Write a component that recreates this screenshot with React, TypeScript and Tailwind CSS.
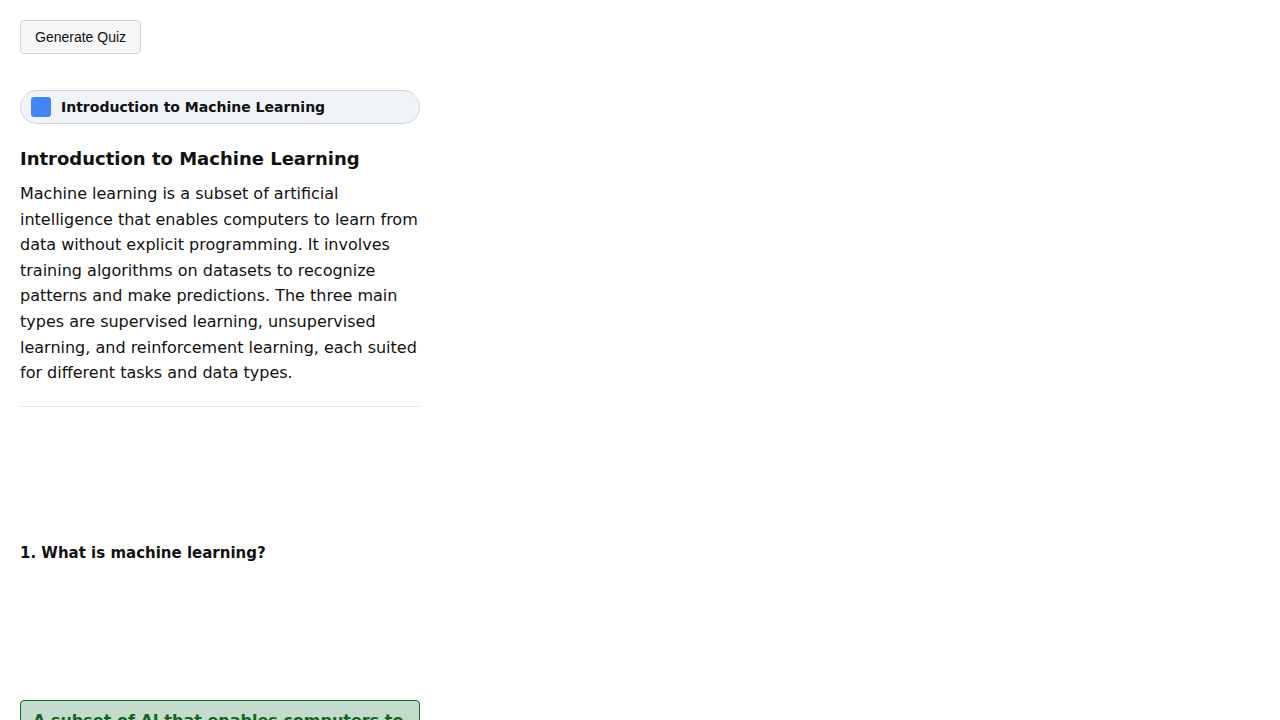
export default function App() {
  return (
    <div className="min-h-screen bg-white p-5 font-['DejaVu_Sans',sans-serif] text-[#111]">
      <div className="w-[400px]">
        <button className="h-[34px] rounded-[4px] border border-[#d1d5db] bg-[#f5f6f8] px-[14px] font-['Liberation_Sans',Arial,sans-serif] text-[14px] text-[#111]">
          Generate Quiz
        </button>

        <div className="mt-9 flex h-[34px] items-center gap-[10px] rounded-full border border-[#d1d5db] bg-[#f0f4f8] px-[10px]">
          <div className="h-5 w-5 rounded-[3px] bg-[#4285f4]" />
          <span className="text-[14px] font-bold">Introduction to Machine Learning</span>
        </div>

        <h2 className="mt-[21px] text-[18px] leading-[27px] font-bold">
          Introduction to Machine Learning
        </h2>
        <p className="mt-[9px] text-[16px] leading-[25.6px]">
          Machine learning is a subset of artificial intelligence that enables computers to learn from data without explicit programming. It involves training algorithms on datasets to recognize patterns and make predictions. The three main types are supervised learning, unsupervised learning, and reinforcement learning, each suited for different tasks and data types.
        </p>
        <hr className="mt-[20px] border-0 border-t border-[#e5e7eb]" />

        <div className="h-[135px]" />

        <h3 className="text-[15px] leading-[22px] font-bold">1. What is machine learning?</h3>

        <div className="h-[136px]" />

        <div className="rounded-[4px] border border-[#0e6b1c] bg-[#c4dccb] px-3 py-[8px] text-[16px] leading-[24px] font-bold text-[#156424]">
          A subset of AI that enables computers to learn from data
        </div>
      </div>
    </div>
  );
}
